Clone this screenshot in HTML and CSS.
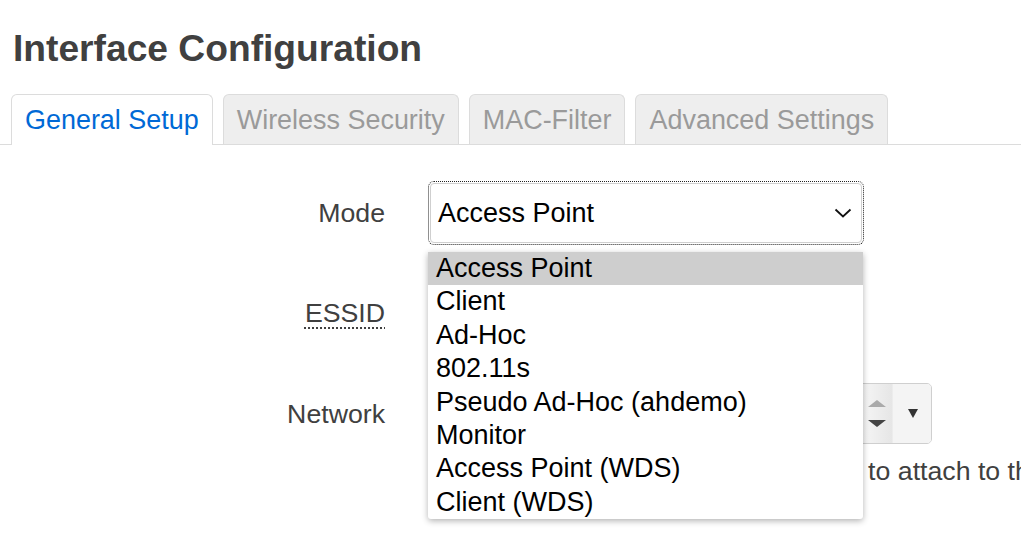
FILE: index.html
```html
<!DOCTYPE html>
<html>
<head>
<meta charset="utf-8">
<link rel="stylesheet" href="styles.css">
</head>
<body>
<h2 class="title">Interface Configuration</h2>
<ul class="tabs">
  <li class="tab active">General Setup</li>
  <li class="tab">Wireless Security</li>
  <li class="tab">MAC-Filter</li>
  <li class="tab">Advanced Settings</li>
</ul>
<div class="form">
  <div class="row">
    <div class="label">Mode</div>
    <div class="field">
      <div class="select">
        <span class="select-text">Access Point</span>
        <svg class="chev" width="18" height="10" viewBox="0 0 18 10"><polyline points="1.5,1.5 9,8.5 16.5,1.5" fill="none" stroke="#111" stroke-width="1.8"/></svg>
      </div>
      <ul class="menu">
        <li class="opt selected">Access Point</li>
        <li class="opt">Client</li>
        <li class="opt">Ad-Hoc</li>
        <li class="opt">802.11s</li>
        <li class="opt">Pseudo Ad-Hoc (ahdemo)</li>
        <li class="opt">Monitor</li>
        <li class="opt">Access Point (WDS)</li>
        <li class="opt">Client (WDS)</li>
      </ul>
    </div>
  </div>
  <div class="row">
    <div class="label"><span class="abbr">ESSID</span></div>
    <div class="field">
      <div class="input"></div>
    </div>
  </div>
  <div class="row row-net">
    <div class="label">Network</div>
    <div class="field">
      <div class="netsel">
        <div class="net-main"></div>
        <div class="net-spin">
          <span class="tri-up"></span>
          <span class="tri-down"></span>
        </div>
        <div class="net-open"><span class="tri-small"></span></div>
      </div>
      <div class="desc">Choose the network(s) you want to attach to this wireless interface or fill out the custom field to define a new network.</div>
    </div>
  </div>
</div>
</body>
</html>
```
FILE: styles.css
```css
html, body {
  margin: 0;
  padding: 0;
  background: #fff;
  overflow: hidden;
}
body {
  font-family: "Liberation Sans", Arial, sans-serif;
  font-size: 26.7px;
  color: #404040;
  width: 1021px;
  height: 536px;
}
.title {
  margin: 27px 0 0 13px;
  font-size: 37.2px;
  font-weight: bold;
  line-height: 42px;
  color: #404040;
}
.tabs {
  list-style: none;
  margin: 25px 0 0 0;
  padding: 0 0 0 11px;
  display: flex;
  gap: 10px;
  border-bottom: 1px solid #dcdcdc;
  height: 50px;
}
.tab {
  box-sizing: border-box;
  height: 50px;
  padding: 10px 13px 0 13px;
  border: 1px solid #dcdcdc;
  border-bottom: none;
  border-radius: 6px 6px 0 0;
  background: #eeeeee;
  color: #9a9a9a;
  font-size: 26.95px;
  line-height: 31px;
  white-space: nowrap;
}
.tab.active {
  background: #fff;
  color: #0069d6;
  height: 51px;
  margin-bottom: -1px;
}
.form {
  margin-top: 39px;
}
.row {
  display: flex;
  align-items: flex-start;
  gap: 45px;
  margin-bottom: 41px;
}
.label {
  width: 385px;
  flex: none;
  text-align: right;
  height: 59px;
  line-height: 59px;
  color: #404040;
}
.abbr {
  text-decoration: underline dotted #404040;
  text-decoration-thickness: 2px;
  text-underline-offset: 5px;
}
.field {
  position: relative;
  flex: none;
}
.select {
  box-sizing: border-box;
  width: 432px;
  height: 60px;
  margin-top: -1px;
  border: 1px solid #cfcfcf;
  border-radius: 4px;
  outline: 1px dotted #222;
  outline-offset: 1px;
  display: flex;
  align-items: center;
  justify-content: space-between;
  padding: 0 9px 0 7px;
  color: #000;
  background: #fff;
  font-size: 27px;
}
.chev {
  display: block;
}
.menu {
  position: absolute;
  left: -2px;
  top: 68px;
  width: 435px;
  margin: 0;
  padding: 0;
  list-style: none;
  background: #fff;
  box-shadow: 0 2px 6px rgba(0,0,0,0.3);
  border-radius: 0 0 3px 3px;
  z-index: 5;
}
.opt {
  height: 33.375px;
  line-height: 33.375px;
  padding-left: 8px;
  color: #000;
  font-size: 27px;
  white-space: nowrap;
}
.opt.selected {
  background: #cecece;
}
.input {
  box-sizing: border-box;
  width: 432px;
  height: 59px;
  border: 1px solid #ccc;
  border-radius: 4px;
}
.row-net .label {
  height: 61px;
  line-height: 61px;
}
.netsel {
  box-sizing: border-box;
  width: 502px;
  height: 61px;
  margin-top: -1px;
  border: 1px solid #cfcfcf;
  border-radius: 5px;
  display: flex;
  overflow: hidden;
}
.net-main {
  flex: 1;
  background: #fff;
}
.net-spin {
  width: 30px;
  background: linear-gradient(to right, #f6f6f6, #e6e6e6);
  display: flex;
  flex-direction: column;
  align-items: center;
  justify-content: center;
  gap: 13px;
  border-right: 1px solid #ececec;
}
.tri-up {
  width: 0;
  height: 0;
  border-left: 9px solid transparent;
  border-right: 9px solid transparent;
  border-bottom: 7px solid #aaaaaa;
}
.tri-down {
  width: 0;
  height: 0;
  border-left: 9px solid transparent;
  border-right: 9px solid transparent;
  border-top: 7px solid #444;
}
.net-open {
  width: 38px;
  background: #f4f4f4;
  display: flex;
  align-items: center;
  justify-content: center;
}
.tri-small {
  width: 0;
  height: 0;
  border-left: 5px solid transparent;
  border-right: 5px solid transparent;
  border-top: 9px solid #333;
  margin-left: 2px;
}
.desc {
  margin-top: 12px;
  padding-left: 48px;
  white-space: nowrap;
  line-height: 31px;
  color: #404040;
}
```
